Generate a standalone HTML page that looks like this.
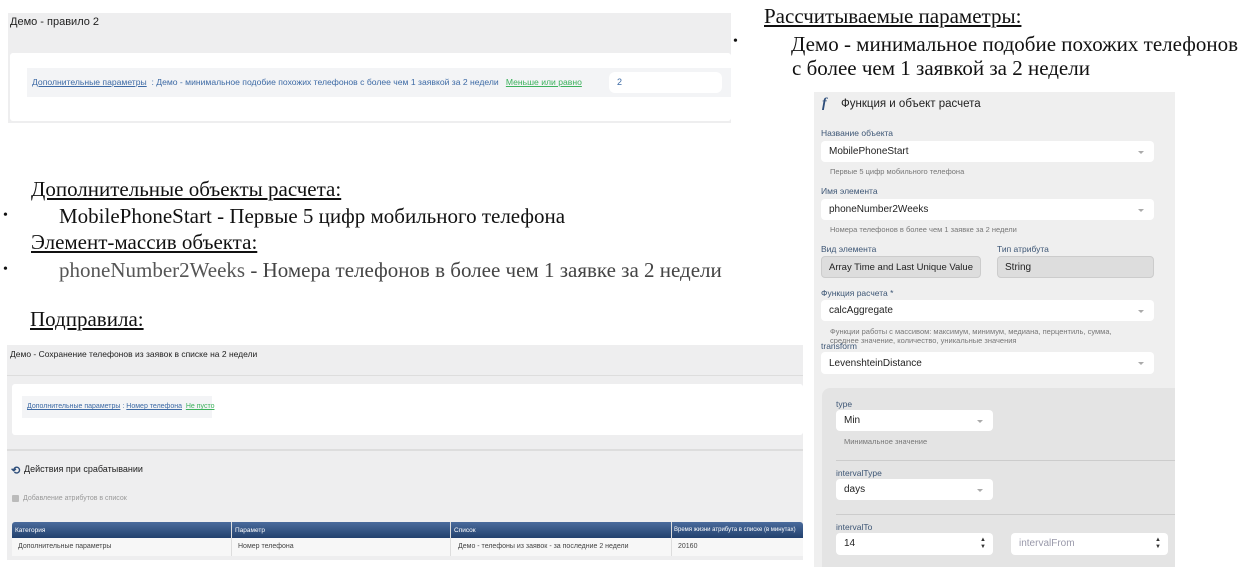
<!DOCTYPE html><html><head><meta charset="utf-8"><style>
*{margin:0;padding:0;box-sizing:border-box}
body{width:1244px;height:567px;background:#fff;position:relative;overflow:hidden;font-family:"Liberation Sans",sans-serif}
.a{position:absolute;white-space:nowrap}
.t{font-family:"Liberation Serif",serif;font-size:21px;color:#111;line-height:22px}
.u{text-decoration:underline}
.sel{position:absolute;background:#fff;border-radius:4px;font-size:10px;color:#222;padding-left:8px;display:flex;align-items:center}
.sel:after{content:"";position:absolute;right:10px;top:50%;margin-top:-1px;border:3px solid transparent;border-top:3px solid #aaa;border-bottom:0}
.lb{font-size:8.5px;color:#3d5675}
.h{font-size:7.5px;color:#777}
.lnk{color:#3d6aa5;text-decoration:underline}
.gr{color:#3cb15c;text-decoration:underline}
</style></head><body>
<div class="a" style="left:8px;top:13px;width:723px;height:110px;background:#eeeeef"></div>
<div class="a" style="left:10px;top:16px;font-size:11px;color:#222">Демо - правило 2</div>
<div class="a" style="left:10px;top:53px;width:721px;height:68px;background:#fff;border-radius:3px"></div>
<div class="a" style="left:27px;top:68px;width:704px;height:29px;background:#f3f4f6"></div>
<div class="a" style="left:32px;top:77px;font-size:8.6px;color:#3d6aa5"><span class="lnk">Дополнительные параметры</span> &nbsp;: Демо - минимальное подобие похожих телефонов с более чем 1 заявкой за 2 недели &nbsp;&nbsp;<span class="gr">Меньше или равно</span></div>
<div class="a" style="left:609px;top:72px;width:113px;height:21px;background:#fff;border-radius:6px;font-size:9px;color:#3d6aa5;padding:5px 8px">2</div>

<div class="a t u" style="left:764px;top:5px">Рассчитываемые параметры:</div>
<div class="a t" style="left:733px;top:31px;font-size:14px">•</div>
<div class="a t" style="left:791px;top:33px">Демо - минимальное подобие похожих телефонов</div>
<div class="a t" style="left:792px;top:57px">с более чем 1 заявкой за 2 недели</div>
<div class="a t u" style="left:31px;top:178px">Дополнительные объекты расчета:</div>
<div class="a t" style="left:3px;top:205px;font-size:14px">•</div>
<div class="a t" style="left:59px;top:205px">MobilePhoneStart - Первые 5 цифр мобильного телефона</div>
<div class="a t u" style="left:31px;top:231px">Элемент-массив объекта:</div>
<div class="a t" style="left:3px;top:259px;font-size:14px">•</div>
<div class="a t" style="left:59px;top:259px;color:#444"><span style="color:#555">phoneNumber2Weeks</span> - Номера телефонов в более чем 1 заявке за 2 недели</div>
<div class="a t u" style="left:30px;top:308px">Подправила:</div>

<div class="a" style="left:7px;top:345px;width:796px;height:215px;background:#eeeeef"></div>
<div class="a" style="left:10px;top:349px;font-size:8.5px;color:#222">Демо - Сохранение телефонов из заявок в списке на 2 недели</div>
<div class="a" style="left:7px;top:375px;width:796px;height:1px;background:#ddd"></div>
<div class="a" style="left:12px;top:384px;width:791px;height:51px;background:#fff;border-radius:3px"></div>
<div class="a" style="left:22px;top:396px;width:190px;height:22px;background:#f3f4f6"></div>
<div class="a" style="left:27px;top:403px;font-size:7px"><span class="lnk">Дополнительные параметры</span> <span style="color:#3d6aa5">:</span> <span class="lnk">Номер телефона</span> &nbsp;<span class="gr">Не пусто</span></div>
<div class="a" style="left:7px;top:449px;width:796px;height:2px;background:#ddd"></div>
<div class="a" style="left:11px;top:464px;font-size:11px;color:#2d4d7a;font-weight:bold">⟲</div>
<div class="a" style="left:24px;top:464px;font-size:9px;color:#222">Действия при срабатывании</div>
<div class="a" style="left:12px;top:495px;width:7px;height:7px;background:#bbb;border-radius:1px"></div>
<div class="a" style="left:23px;top:495px;font-size:7px;color:#999">Добавление атрибутов в список</div>
<div class="a" style="left:12px;top:522px;width:791px;height:16px;background:linear-gradient(#4a6b9c,#22416e);border-radius:3px 3px 0 0"></div>
<div class="a" style="left:12px;top:538px;width:791px;height:18px;background:#f7f7f7"></div>
<div class="a" style="left:231px;top:522px;width:1px;height:34px;background:#ddd"></div>
<div class="a" style="left:450px;top:522px;width:1px;height:34px;background:#ddd"></div>
<div class="a" style="left:671px;top:522px;width:1px;height:34px;background:#ddd"></div>
<div class="a" style="left:15px;top:527px;font-size:6.5px;color:#fff">Категория</div>
<div class="a" style="left:235px;top:527px;font-size:6.5px;color:#fff">Параметр</div>
<div class="a" style="left:454px;top:527px;font-size:6.5px;color:#fff">Список</div>
<div class="a" style="left:674px;top:527px;font-size:6px;color:#fff">Время жизни атрибута в списке (в минутах)</div>
<div class="a" style="left:18px;top:543px;font-size:7px;color:#444">Дополнительные параметры</div>
<div class="a" style="left:238px;top:543px;font-size:7px;color:#444">Номер телефона</div>
<div class="a" style="left:458px;top:543px;font-size:7px;color:#444">Демо - телефоны из заявок - за последние 2 недели</div>
<div class="a" style="left:678px;top:543px;font-size:7px;color:#444">20160</div>

<div class="a" style="left:814px;top:92px;width:361px;height:475px;background:#efefef"></div>
<div class="a" style="left:822px;top:96px;font-size:14px;font-style:italic;font-weight:bold;color:#2d4d7a;font-family:'Liberation Serif',serif">f</div>
<div class="a" style="left:841px;top:98px;font-size:11.5px;color:#222">Функция и объект расчета</div>
<div class="a lb" style="left:821px;top:128px">Название объекта</div>
<div class="sel" style="left:821px;top:141px;width:333px;height:21px">MobilePhoneStart</div>
<div class="a h" style="left:830px;top:167px">Первые 5 цифр мобильного телефона</div>
<div class="a lb" style="left:821px;top:186px">Имя элемента</div>
<div class="sel" style="left:821px;top:199px;width:333px;height:21px">phoneNumber2Weeks</div>
<div class="a h" style="left:830px;top:225px">Номера телефонов в более чем 1 заявке за 2 недели</div>
<div class="a lb" style="left:821px;top:244px">Вид элемента</div>
<div class="a lb" style="left:997px;top:244px">Тип атрибута</div>
<div class="a" style="left:821px;top:256px;width:160px;height:22px;background:#ddd;border:1px solid #ccc;border-radius:4px;font-size:9.5px;color:#222;padding:5px 7px;overflow:hidden">Array Time and Last Unique Value</div>
<div class="a" style="left:997px;top:256px;width:157px;height:22px;background:#ddd;border:1px solid #ccc;border-radius:4px;font-size:10px;color:#222;padding:5px 7px">String</div>
<div class="a lb" style="left:821px;top:288px">Функция расчета *</div>
<div class="sel" style="left:821px;top:300px;width:333px;height:21px">calcAggregate</div>
<div class="a h" style="left:830px;top:327px;line-height:9px">Функции работы с массивом: максимум, минимум, медиана, перцентиль, сумма,<br>среднее значение, количество, уникальные значения</div>
<div class="a lb" style="left:821px;top:341px">transform</div>
<div class="sel" style="left:821px;top:352px;width:333px;height:22px">LevenshteinDistance</div>
<div class="a" style="left:822px;top:388px;width:353px;height:179px;background:#e4e4e4;border-radius:8px 0 0 0"></div>
<div class="a lb" style="left:836px;top:399px">type</div>
<div class="sel" style="left:836px;top:410px;width:157px;height:21px">Min</div>
<div class="a h" style="left:844px;top:437px">Минимальное значение</div>
<div class="a" style="left:836px;top:460px;width:339px;height:1px;background:#ccc"></div>
<div class="a lb" style="left:836px;top:468px">intervalType</div>
<div class="sel" style="left:836px;top:479px;width:157px;height:21px">days</div>
<div class="a" style="left:836px;top:514px;width:339px;height:1px;background:#ccc"></div>
<div class="a lb" style="left:836px;top:522px">intervalTo</div>
<div class="a" style="left:836px;top:533px;width:157px;height:22px;background:#fff;border-radius:4px;font-size:10px;color:#222;padding:5px 8px">14<span style="position:absolute;right:7px;top:4px;font-size:6px;line-height:7px;color:#333">▲<br>▼</span></div>
<div class="a" style="left:1011px;top:533px;width:157px;height:22px;background:#fff;border-radius:4px;font-size:10px;color:#99a;padding:5px 8px">intervalFrom<span style="position:absolute;right:7px;top:4px;font-size:6px;line-height:7px;color:#333">▲<br>▼</span></div>
</body></html>
